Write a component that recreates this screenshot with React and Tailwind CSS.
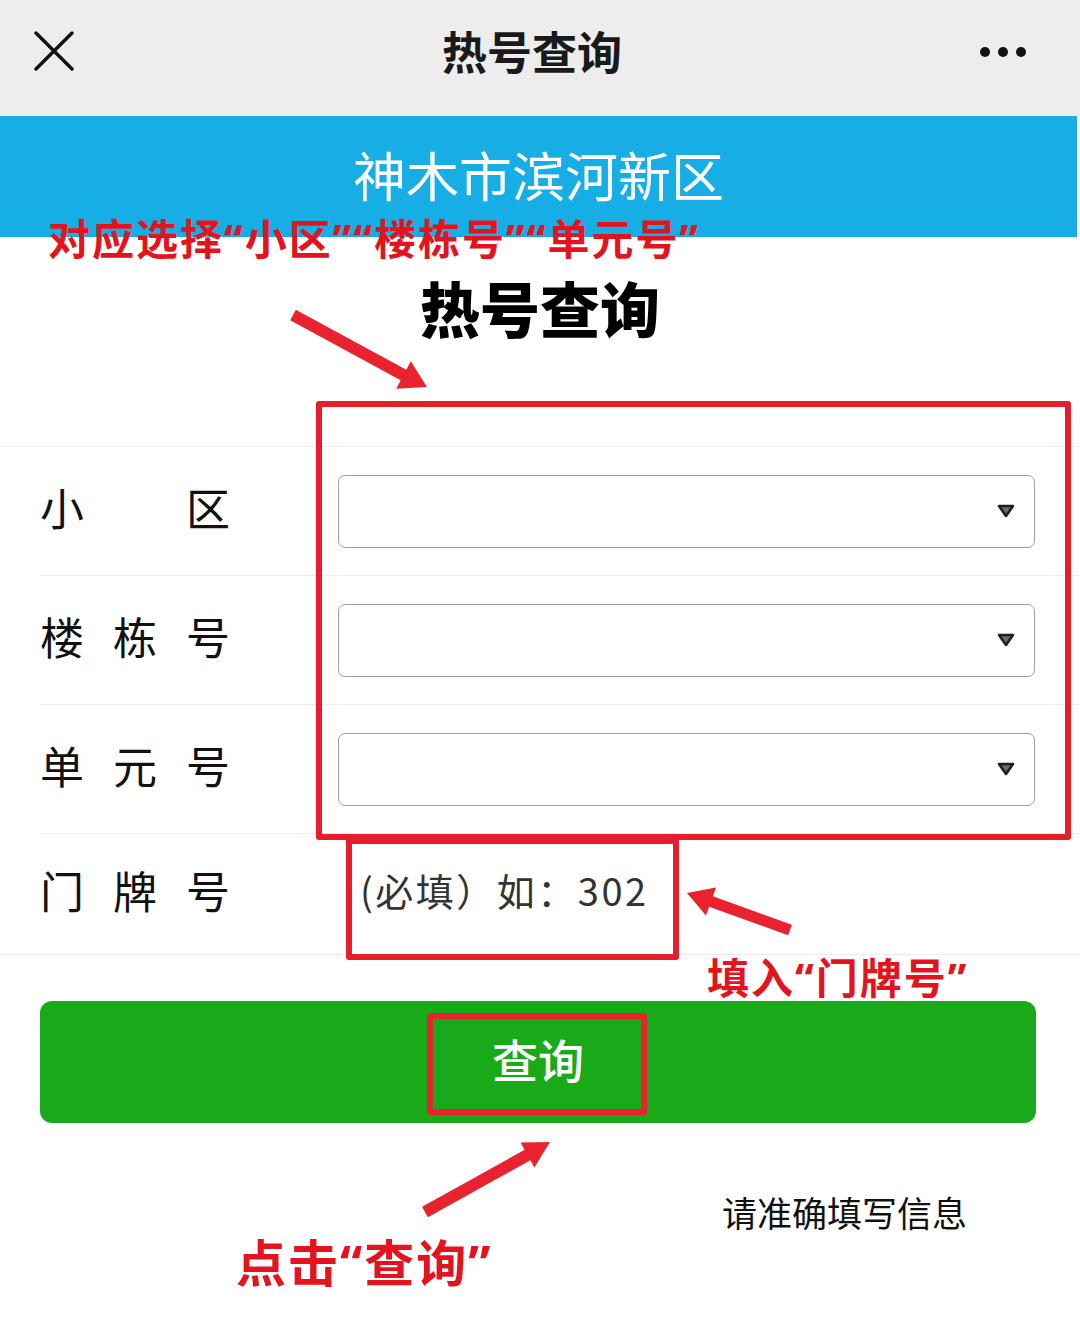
import React from 'react';

const FONT = { fontFamily: '"Noto Sans CJK SC", "Noto Sans", sans-serif' };
// latin font first so the curly quotes stay narrow, as in the screenshot
const NOTE_FONT = { fontFamily: '"Noto Sans", "Noto Sans CJK SC", sans-serif' };

const ROWS = [
  { key: 'xq', chars: ['小', '区'] },
  { key: 'ld', chars: ['楼', '栋', '号'] },
  { key: 'dy', chars: ['单', '元', '号'] },
];

function Caret() {
  return (
    <svg width="18" height="14" viewBox="0 0 18 14" className="absolute right-[19px] top-1/2 -translate-y-1/2">
      <polygon points="2,2 16,2 9,12" fill="#6b6b6b" stroke="#1f1f1f" strokeWidth="2.6" strokeLinejoin="round" />
    </svg>
  );
}

function Label({ chars }) {
  return (
    <div className="w-[190px] mb-[8px] flex justify-between text-[44px] leading-none text-[#111]">
      {chars.map((c, i) => <span key={i}>{c}</span>)}
    </div>
  );
}

export default function App() {
  return (
    <div className="relative w-[1080px] min-h-[1330px] bg-white overflow-hidden" style={FONT}>
      {/* top bar */}
      <header className="h-[116px] bg-[#ededed] grid grid-cols-[1fr_auto_1fr] items-center pb-[16px]">
        <div className="pl-[33px] pt-[4px]">
          <svg width="42" height="42" viewBox="0 0 42 42">
            <path d="M3 2 L39 38 M39 2 L3 38" stroke="#111" strokeWidth="3.4" strokeLinecap="round" />
          </svg>
        </div>
        <h1 className="text-[45px] leading-none font-bold text-[#1a1a1a] mr-[16px]">热号查询</h1>
        <div className="flex justify-end items-center gap-[8px] pr-[54px] pt-[4px]">
          <span className="w-[10px] h-[10px] rounded-full bg-[#111]" />
          <span className="w-[10px] h-[10px] rounded-full bg-[#111]" />
          <span className="w-[10px] h-[10px] rounded-full bg-[#111]" />
        </div>
      </header>

      {/* banner */}
      <div className="h-[121px] w-[1077px] bg-[#17ade5] flex items-center justify-center pb-[4px]">
        <span className="text-[53px] leading-none text-white">神木市滨河新区</span>
      </div>

      {/* page title */}
      <div className="pt-[40px] pb-[109px] flex justify-center">
        <h2 className="text-[60px] leading-none font-black text-black">热号查询</h2>
      </div>

      {/* form */}
      <div className="border-t border-b border-[#ebebeb]">
        {ROWS.map(r => (
          <div key={r.key} className="pl-[40px]">
            <div className="h-[129px] flex items-center border-b border-[#ebebeb]">
              <Label chars={r.chars} />
              <div className="relative ml-[108px] w-[697px] h-[73px] border border-[#a0a0a0] rounded-[7px] bg-white">
                <Caret />
              </div>
            </div>
          </div>
        ))}
        <div className="pl-[40px] h-[120px] flex items-center">
          <Label chars={['门', '牌', '号']} />
          <span className="ml-[130px] mb-[8px] text-[38px] leading-none tracking-[2.5px] text-[#333]">(必填）如：302</span>
        </div>
      </div>

      {/* submit */}
      <div className="mt-[46px] ml-[40px] w-[996px] h-[122px] rounded-[12px] bg-[#19aa19] flex items-center justify-center pb-[8px]">
        <span className="text-[46px] leading-none font-medium text-white">查询</span>
      </div>

      <div className="mt-[71px] flex justify-end pr-[113px]">
        <span className="text-[35px] leading-none text-[#111]">请准确填写信息</span>
      </div>

      {/* annotations */}
      <div className="absolute left-[316px] top-[401px] w-[755px] h-[439px] border-[6px] border-[#e61e2b] rounded-[3px]" />
      <div className="absolute left-[346px] top-[838px] w-[333px] h-[122px] border-[6px] border-[#e61e2b] rounded-[3px]" />
      <div className="absolute left-[427px] top-[1013px] w-[220px] h-[102px] border-[6px] border-[#e8222e] rounded-[2px]" />

      <span style={NOTE_FONT} className="absolute left-[48px] top-[218px] text-[42px] leading-none tracking-[2px] font-bold text-[#e3141e]">对应选择“小区”“楼栋号”“单元号”</span>
      <span style={NOTE_FONT} className="absolute left-[707px] top-[957px] text-[42px] leading-none tracking-[2px] font-bold text-[#e3141e]">填入“门牌号”</span>
      <span style={NOTE_FONT} className="absolute left-[236px] top-[1238px] text-[50px] leading-none tracking-[2px] font-bold text-[#e3141e]">点击“查询”</span>

      <svg className="absolute left-0 top-0 pointer-events-none" width="1080" height="1330" viewBox="0 0 1080 1330">
        <polygon fill="#e8222e" points="295.8,309.7 406.3,369.7 410.8,361.3 427,387 396.2,388.7 400.7,380.3 290.2,320.3" />
        <polygon fill="#e8222e" points="791.9,924.8 712.9,896.3 716,887.6 687,893 706,915.4 709.1,906.7 788.1,935.2" />
        <polygon fill="#e8222e" points="422.1,1206.8 524.6,1149.8 520.6,1142.6 550,1142 534.4,1167.4 530.4,1160.2 427.9,1217.2" />
      </svg>
    </div>
  );
}
